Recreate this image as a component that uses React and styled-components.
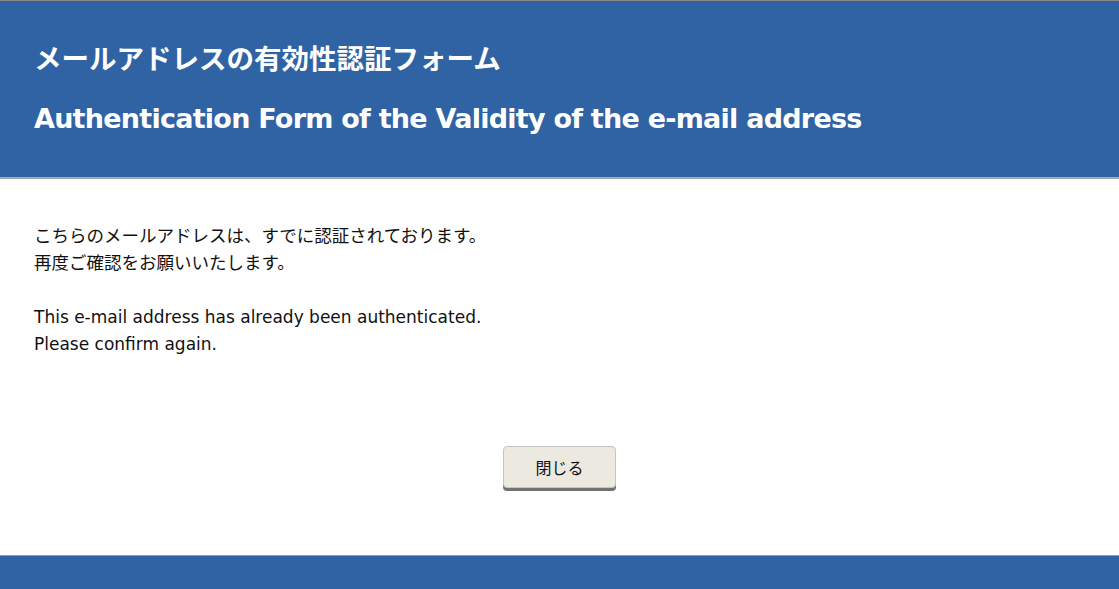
import React from 'react'
import styled, { createGlobalStyle } from 'styled-components'

const GlobalStyle = createGlobalStyle`
  html, body {
    margin: 0;
    padding: 0;
    background: #ffffff;
  }
  body {
    font-family: "DejaVu Sans", "Noto Sans CJK JP", sans-serif;
    color: #111111;
  }
`

const Page = styled.div`
  display: flex;
  flex-direction: column;
  min-height: 589px;
`

const Header = styled.header`
  background: #3063a3;
  border-top: 1px solid #8a8a8a;
  border-bottom: 2px solid #a9a9a9;
  padding: 28px 34px 28px;
  color: #ffffff;
`

const Title = styled.h1`
  margin: 0;
  font-size: ${props => props.jp ? '27.5px' : '27px'};
  font-weight: bold;
  line-height: 60px;
  letter-spacing: ${props => props.jp ? '0' : '-0.75px'};
`

const Main = styled.main`
  flex: 1;
  padding: 44px 34px 0;
`

const Message = styled.p`
  margin: 0 0 27px;
  font-size: ${props => props.jp ? '17.5px' : '17px'};
  line-height: 27px;
`

const ButtonRow = styled.div`
  display: flex;
  justify-content: center;
  padding-top: 61px;
`

const CloseButton = styled.button`
  width: 113px;
  height: 42px;
  background: #ece9e0;
  border: 1px solid #c4c4c4;
  border-radius: 4px;
  box-shadow: 0 3px 0 #727272;
  font-family: "Noto Sans CJK JP", sans-serif;
  font-size: 16px;
  color: #111111;
  cursor: pointer;
`

const Footer = styled.footer`
  height: 33px;
  background: #3063a3;
  border-top: 1px solid #9a9a9a;
`

export default function App() {
  return (
    <Page>
      <GlobalStyle />
      <Header>
        <Title jp>メールアドレスの有効性認証フォーム</Title>
        <Title>Authentication Form of the Validity of the e-mail address</Title>
      </Header>
      <Main>
        <Message jp>
          こちらのメールアドレスは、すでに認証されております。<br />
          再度ご確認をお願いいたします。
        </Message>
        <Message>
          This e-mail address has already been authenticated.<br />
          Please confirm again.
        </Message>
        <ButtonRow>
          <CloseButton>閉じる</CloseButton>
        </ButtonRow>
      </Main>
      <Footer />
    </Page>
  )
}
